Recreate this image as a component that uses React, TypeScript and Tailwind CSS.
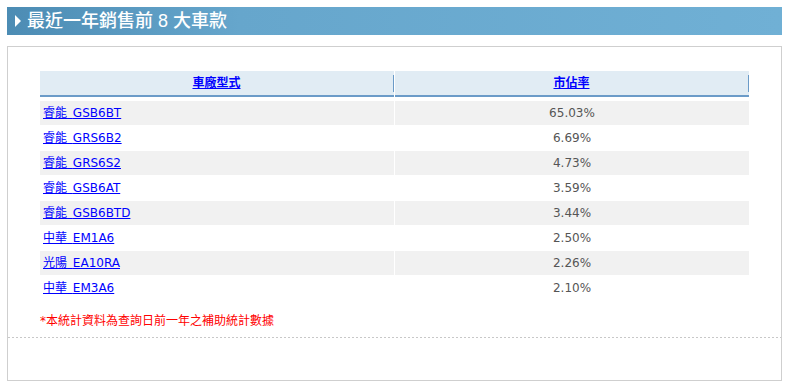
const rows = [
  { brand: "睿能", model: "GSB6BT", share: "65.03%" },
  { brand: "睿能", model: "GRS6B2", share: "6.69%" },
  { brand: "睿能", model: "GRS6S2", share: "4.73%" },
  { brand: "睿能", model: "GSB6AT", share: "3.59%" },
  { brand: "睿能", model: "GSB6BTD", share: "3.44%" },
  { brand: "中華", model: "EM1A6", share: "2.50%" },
  { brand: "光陽", model: "EA10RA", share: "2.26%" },
  { brand: "中華", model: "EM3A6", share: "2.10%" }
]

function HeadCell({ label }: { label: string }) {
  return (
    <div className="flex w-[354px] h-[26px] items-center bg-[#e1ecf4] border-b-2 border-[#6b9bc8]">
      <a href="#" className="flex-1 text-center text-[12px] font-bold text-[#0000ff] underline">
        {label}
      </a>
      <div className="w-px h-[17px] bg-[#6b9bc8]" />
    </div>
  )
}

export default function App() {
  return (
    <div className="p-[7px] bg-white font-['DejaVu_Sans','Noto_Sans_CJK_TC',sans-serif]">
      {/* title bar */}
      <div className="flex items-center w-[775px] h-[28px] pl-[8px] bg-linear-to-r from-[#4c8cb4] via-[#66a6cc] via-30% to-[#70b0d5]">
        <span className="w-0 h-0 border-y-[6px] border-y-transparent border-l-[6px] border-l-white" />
        <h2 className="ml-[6px] text-[18px] font-medium text-white leading-none font-['Liberation_Sans','Noto_Sans_CJK_TC',sans-serif]">
          最近一年銷售前 8 大車款
        </h2>
      </div>

      <div className="mt-[11px] w-[775px] border border-[#cfcfcf]">
        <div className="pt-[24px] pl-[32px]">
          <div className="flex gap-px">
            <HeadCell label="車廠型式" />
            <HeadCell label="市佔率" />
          </div>

          <div className="mt-[4px] flex flex-col gap-px">
            {rows.map((r, i) => (
              <div key={r.model} className="flex gap-px">
                <div
                  className={`flex items-center w-[354px] h-[24px] pl-[3px] ${i % 2 === 0 ? "bg-[#f1f1f1]" : "bg-white"}`}>
                  <a href="#" className="text-[12px] text-[#0000ff] underline [word-spacing:2px] whitespace-pre">
                    {r.brand} {r.model}
                  </a>
                </div>
                <div
                  className={`flex items-center justify-center w-[354px] h-[24px] text-[12px] text-[#555] ${i % 2 === 0 ? "bg-[#f1f1f1]" : "bg-white"}`}>
                  {r.share}
                </div>
              </div>
            ))}
          </div>

          <p className="mt-[13px] text-[12px] leading-[16px] text-[#ff0000]">
            *本統計資料為查詢日前一年之補助統計數據
          </p>
        </div>

        <div className="mt-[8px] h-px bg-[repeating-linear-gradient(90deg,#c8c8c8_0_2px,transparent_2px_4px)]" />
        <div className="h-[42px]" />
      </div>
    </div>
  )
}
